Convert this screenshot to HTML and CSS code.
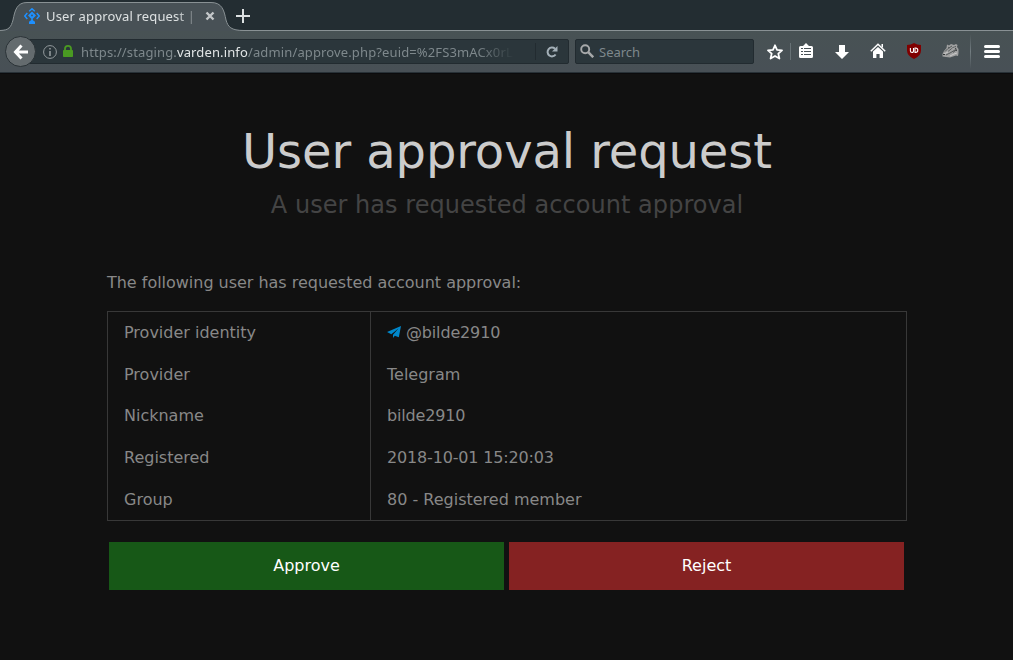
FILE: index.html
```html
<!DOCTYPE html>
<html lang="en">
<head>
<meta charset="utf-8">
<title>User approval request</title>
<link rel="stylesheet" href="styles.css">
</head>
<body>
<header class="browser">
  <div class="tabstrip">
    <div class="tab">
      <svg class="tab-shape" width="244" height="31" viewBox="0 0 244 31">
        <path d="M0 31V30C9 30 11 27 13 20C15 10 17 2.500 27 2.500H211C222 2.500 224 10 226 20C228 27 231 30.500 244 30.500V31Z" fill="#485156"/>
        <path d="M0 30.500C9 30.500 11 27 13 20C15 10 17 2.500 27 2.500H211C222 2.500 224 10 226 20C228 27 231 30.500 244 30.500" fill="none" stroke="#899194"/>
      </svg>
      <svg class="favicon" width="16" height="16" viewBox="0 0 16 16" fill="none" stroke="#1e90ff" stroke-width="1.500">
        <path d="M5.200 3.300L8 .8l2.800 2.500M3.300 5L.8 8l2.500 3M12.700 5l2.500 3-2.500 3"/>
        <path d="M8 3.600l4 4-3 3H7l-3-3Z M8 11.500l3 2.300V16H5v-2.200Z" fill="#1e90ff" stroke="none"/>
        <circle cx="8" cy="7.400" r=".9" fill="#485156" stroke="none"/>
        <path d="M8 10v3"/>
      </svg>
      <span class="tab-title">User approval request |</span>
      <svg class="tab-close" width="10" height="10" viewBox="0 0 10 10" stroke="#c3c7c9" stroke-width="2.400"><path d="M1.500 1.500l7 7M8.500 1.500l-7 7"/></svg>
    </div>
    <svg class="new-tab" width="14" height="14" viewBox="0 0 14 14" stroke="#dce0e1" stroke-width="2"><path d="M7 0v14M0 7h14"/></svg>
  </div>
  <nav class="toolbar">
    <div class="back"><svg width="16" height="16" viewBox="0 0 16 16" fill="none" stroke="#fff" stroke-width="3"><path d="M8.500 1.500L2.500 8l6 6.500M2.500 8H15"/></svg></div>
    <div class="urlbar">
      <svg class="info" width="14" height="14" viewBox="0 0 14 14"><circle cx="7" cy="7" r="6.400" fill="none" stroke="#939a9d"/><path d="M6.200 3h1.600v1.600H6.200zM6.200 6h1.600v5H6.200z" fill="#939a9d"/></svg>
      <svg class="lock" width="10" height="12" viewBox="0 0 10 12"><path d="M2 6V3.800a3 2.900 0 0 1 6 0V6" fill="none" stroke="#4a9a22" stroke-width="1.800"/><rect y="5" width="10" height="7" rx=".8" fill="#4a9a22"/></svg>
      <span class="url">https://staging.<b>varden.info</b>/admin/approve.php?euid=%2FS3mACx0rL</span>
      <span class="reload"><svg width="12" height="12" viewBox="0 0 12 12"><path d="M9.600 8.500A4.400 4.400 0 1 1 9 2.800" fill="none" stroke="#a4b0b8" stroke-width="2"/><path d="M11.500 0v5.500H6Z" fill="#a4b0b8"/></svg></span>
    </div>
    <div class="search">
      <svg width="14" height="14" viewBox="0 0 14 14" fill="none" stroke="#a7a9aa"><circle cx="5.200" cy="5.200" r="4" stroke-width="1.900"/><path d="M8.200 8.200l5 5" stroke-width="2.500"/></svg>
      <span>Search</span>
    </div>
    <div class="tools">
      <svg width="16" height="16" viewBox="0 0 16 16"><path d="M8 1.300l2 4.500 5 .5-3.700 3.300 1.100 4.900L8 12l-4.400 2.500 1.100-4.900L1 6.300l5-.5Z" fill="none" stroke="#fff" stroke-width="1.800" stroke-linejoin="round"/></svg>
      <i class="split"></i>
      <svg class="clip" width="14" height="15" viewBox="0 0 14 15"><path d="M1.500 3H4L7 0l3 3h2.500Q14 3 14 4.500v9Q14 15 12.500 15h-11Q0 15 0 13.500v-9Q0 3 1.500 3Z" fill="#fff"/><path d="M2 5.500h2M5 5.500h7M2 8.500h2M5 8.500h7M2 11.500h2M5 11.500h7" stroke="#485156"/></svg>
      <svg class="down" width="14" height="14" viewBox="0 0 14 14"><path d="M4 0h6v7h4l-7 7-7-7h4Z" fill="#fff"/></svg>
      <svg class="home" width="16" height="15" viewBox="0 0 16 15"><path d="M8 4l5 4.500V15H9.600v-4H6.400v4H3V8.500Z" fill="#fff"/><path d="M.8 8.200L8 1.300l7.200 6.900" fill="none" stroke="#fff" stroke-width="1.500"/><path d="M11.500 1H13v4l-1.500-1.500Z" fill="#fff"/></svg>
      <svg class="shield" width="14" height="16" viewBox="0 0 14 16"><path d="M7 0Q10 1.800 14 2v5.500Q14 13 7 16 0 13 0 7.500V2Q4 1.800 7 0Z" fill="#800000"/><path d="M3.400 5v3q0 1.400 1.600 1.400T6.500 8V5M8 5v4.400h.6a2.200 2.200 0 0 0 0-4.400Z" fill="none" stroke="#fff" stroke-width="1.100"/></svg>
      <svg class="badger" width="17" height="15" viewBox="0 0 17 15"><path d="M.5 11l1.500-3 2.500-3 .5-3.500 2 1L9 1l3 1 2-1 1.500 1-.5 2 1.500 2v4l-.5 3-2-.5-3 1-3 1-4-.5-3.500-.5Z" fill="#a0a1a1"/><path d="M2 11l4-2 3-3 4-2M8 13l4-2 3-1" fill="none" stroke="#c8c8c8"/><path d="M3 8.500l3-3 4-2.500M6 8.500l5-4 3-1M4 12l4-2 5-3M11 9.500l3-2.500M6 4l1.500 1" fill="none" stroke="#4c5051" stroke-width=".9"/><path d="M1 11.500h2M13.500 5l1 3" stroke="#333738"/></svg>
      <i class="divider"></i>
      <svg class="menu" width="16" height="13" viewBox="0 0 16 13" stroke="#fff" stroke-width="3" stroke-linecap="round"><path d="M1.500 1.500h13M1.500 6.500h13M1.500 11.500h13"/></svg>
    </div>
  </nav>
</header>
<main class="page">
  <h1>User approval request</h1>
  <h2>A user has requested account approval</h2>
  <p class="intro">The following user has requested account approval:</p>
  <dl class="details">
    <dt>Provider identity</dt><dd class="numeric"><svg class="plane" width="14" height="12" viewBox="0 0 14 12"><path d="M14 0l-2.200 11.300-4-1.500L6 12V8.800L11.500 2.600 4.300 8.200 0 6Z" fill="#0088cc"/></svg>@bilde2910</dd>
    <dt>Provider</dt><dd>Telegram</dd>
    <dt>Nickname</dt><dd class="numeric">bilde2910</dd>
    <dt>Registered</dt><dd class="numeric">2018-10-01 15:20:03</dd>
    <dt>Group</dt><dd>80 - Registered member</dd>
  </dl>
  <div class="actions">
    <button class="approve">Approve</button>
    <button class="reject">Reject</button>
  </div>
</main>
</body>
</html>
```
FILE: styles.css
```css
* { box-sizing: border-box; }
body { margin: 0; height: 660px; overflow: hidden; background: #111; font-family: "DejaVu Sans", sans-serif; }
svg { display: block; flex: none; }

.browser { height: 74px; font: 13px/18px "Noto Sans", sans-serif; border-bottom: 1px solid #0b0b0d; }
.tabstrip { display: flex; height: 31px; background: #232d32; box-shadow: inset 0 -1px #899194; }
.tab { position: relative; display: flex; width: 236px; padding-left: 24px; }
.tab-shape { position: absolute; left: 0; top: 0; }
.favicon { position: relative; margin-top: 8px; }
.tab-title { position: relative; width: 154px; margin: 7px 0 0 6px; white-space: nowrap; letter-spacing: .15px; color: #dde1e2; mask-image: linear-gradient(90deg, #000 130px, transparent 156px); }
.tab-close { position: relative; margin: 11px 0 0 5px; }
.new-tab { position: relative; margin-top: 9px; }

.toolbar { display: flex; height: 42px; padding-left: 5px; background: linear-gradient(#485254, #485056); border-bottom: 1px solid #283137; }
.back { z-index: 1; display: flex; align-items: center; justify-content: center; width: 31px; height: 31px; margin-top: 5px; border: 1px solid #2b3337; border-radius: 50%; background: #646b6e; }
.urlbar, .search { display: flex; align-items: center; height: 25px; margin-top: 8px; background: #2b363b; border: 1px solid #222b30; border-radius: 2px; }
.urlbar { width: 541px; margin-left: -8px; padding-left: 14px; }
.lock { margin: 0 0 1px 6px; }
.url { width: 433px; margin-left: 8px; white-space: nowrap; letter-spacing: .13px; color: #7e888c; mask-image: linear-gradient(90deg, #000 395px, transparent 433px); }
.url b { font-weight: 400; color: #e1e5e6; }
.reload { display: flex; align-items: center; height: 17px; margin-left: 21px; padding-left: 10px; border-left: 1px solid #222b30; }
.search { width: 179px; margin-left: 6px; padding: 0 4px; gap: 5px; color: #7e888c; }
.search svg { margin-bottom: 2px; }

.tools { display: flex; align-items: center; height: 41px; margin-left: 13px; }
.split { width: 1px; height: 17px; margin: 0 8px 0 7px; background: #687276; }
.clip { margin-bottom: 2px; }
.down { margin-left: 22px; }
.home { margin: 0 0 2px 21px; }
.shield { margin: 0 0 2px 21px; }
.badger { margin: 0 0 2px 21px; }
.divider { width: 1px; height: 35px; margin-left: 11px; background: linear-gradient(transparent, #737d81, transparent); }
.menu { margin-left: 13px; }

.page { width: 800px; margin: 0 0 0 107px; font-size: 16px; line-height: 25.6px; color: #888; }
h1, h2 { margin: 0; font-weight: 400; text-align: center; }
h1 { padding-top: 49px; font-size: 48px; line-height: 56px; letter-spacing: -.1px; color: #ccc; }
h2 { padding-top: 10px; font-size: 24px; line-height: 32px; letter-spacing: .04px; color: #444; }
.intro { margin: 49px 0 15px; letter-spacing: -.02px; }
.details { display: grid; grid-template-columns: 263px 1fr; margin: 0; border: 1px solid #383838; }
.details dt, .details dd { margin: 0; padding: 8.7px 16px 7.3px; }
.details dt { border-right: 1px solid #383838; }
.details dt:last-of-type, .details dd:last-child { padding-bottom: 7.7px; }
.details .numeric { letter-spacing: -.16px; }
.plane { display: inline-block; margin-right: 5px; }
.actions { display: flex; gap: 5px; margin: 21px 3px 0 2px; }
.actions button { flex: 1; height: 48px; padding: 0; border: 0; font: 16px "DejaVu Sans", sans-serif; color: #fff; }
.approve { background: #175817; }
.reject { background: #852222; }
```
